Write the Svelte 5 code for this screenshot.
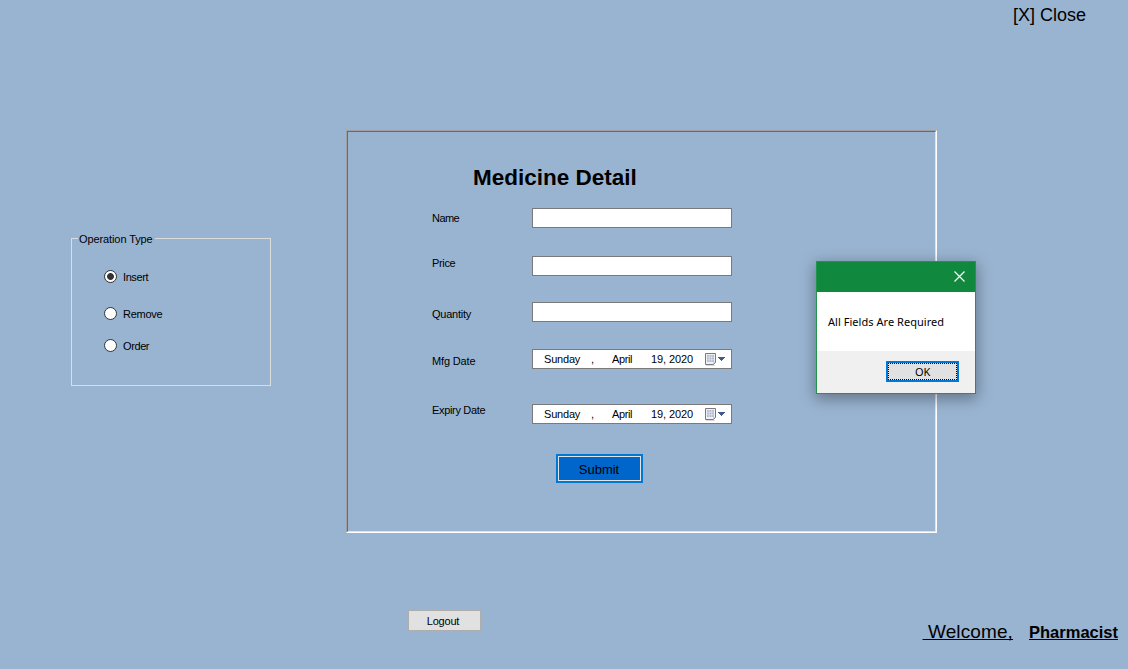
<script>
  const operations = [
    { name: 'Insert', top: 0, ls: '-0.4px' },
    { name: 'Remove', top: 24, ls: '-0.25px' },
    { name: 'Order', top: 19, ls: '-0.4px' }
  ];
  let selected = $state('Insert');

  const fields = [
    { label: 'Name', gap: 0, shift: 0, ls: '-0.55px' },
    { label: 'Price', gap: 28, shift: -6, ls: '-0.35px' },
    { label: 'Quantity', gap: 26, shift: 4, ls: '-0.25px' },
    { label: 'Mfg Date', gap: 27, shift: 4, date: true, ls: '-0.15px' },
    { label: 'Expiry Date', gap: 35, shift: -8, date: true, ls: '-0.33px' }
  ];
</script>

<div class="screen">
  <header><span class="close">[X] Close</span></header>

  <main>
    <section class="group">
      <span class="legend">Operation Type</span>
      {#each operations as op}
        <label class="radio" style="margin-top:{op.top}px">
          <input type="radio" name="op" value={op.name} bind:group={selected} />
          <span style="letter-spacing:{op.ls}">{op.name}</span>
        </label>
      {/each}
    </section>

    <section class="panel">
      <div class="inner">
        <h1>Medicine Detail</h1>
        {#each fields as f}
          <div class="field" style="margin-top:{f.gap}px">
            <span class="label" style="margin-top:{f.shift}px;letter-spacing:{f.ls}">{f.label}</span>
            {#if f.date}
              <div class="box date">
                <span class="day">Sunday</span><span class="comma">,</span>
                <span class="month">April</span><span class="year">19, 2020</span>
                <svg width="22" height="14" viewBox="0 0 22 14">
                  <path d="M2 13.500h9" fill="none" stroke="#dcd8d8" />
                  <path d="M1.500 1.500h10v9l-2 2h-8z" fill="#eef1f6" stroke="#7d7780" stroke-linejoin="round" />
                  <path d="M3 3h7v7H3z" fill="#b3bccd" />
                  <path d="M3 5.200h7M3 7.700h7M5.200 3v7M7.700 3v7" stroke="#e9edf4" stroke-width=".6" />
                  <path d="M9.500 12.500v-2h2z" fill="#9a959d" />
                  <path d="M14 5h7v1h-1v1h-1v1h-1v1h-1V8h-1V7h-1V6h-1z" fill="#45598a" />
                </svg>
              </div>
            {:else}
              <input class="box" type="text" aria-label={f.label} />
            {/if}
          </div>
        {/each}
        <button class="submit"><span>Submit</span></button>
      </div>
    </section>
  </main>

  <footer>
    <button class="logout">Logout</button>
    <div class="user"><span class="welcome">&nbsp;Welcome,</span><span class="role">Pharmacist</span></div>
  </footer>

  <div class="dialog">
    <div class="titlebar">
      <svg width="11" height="11" viewBox="0 0 11 11"><path d="M.5.5l10 10M10.500.5l-10 10" stroke="#fff" stroke-width="1.2" /></svg>
    </div>
    <div class="message">All Fields Are Required</div>
    <div class="actions"><button class="ok"><span>OK</span></button></div>
  </div>
</div>

<style>
  :global(body) { background: #99b4d1; }
  .screen {
    position: relative; width: 1128px; height: 669px; overflow: hidden;
    display: flex; flex-direction: column; box-sizing: border-box;
    background: #99b4d1; color: #000;
    font: 11px/14px "Liberation Sans", Arial, sans-serif;
  }
  button, input { font: inherit; color: inherit; box-sizing: border-box; padding: 0; margin: 0; }
  header { height: 130px; display: flex; justify-content: flex-end; padding: 5px 42px 0 0; box-sizing: border-box; }
  .close { font-size: 18px; line-height: 20px; white-space: nowrap; }
  main { display: flex; height: 403px; padding-left: 71px; align-items: flex-start; }
  .group {
    width: 200px; height: 148px; margin: 108px 75px 0 0; box-sizing: border-box;
    border: 1px solid #dcdcdc; padding-left: 32px;
  }
  .legend {
    display: block; width: 77px; height: 14px; margin: -7px 0 24px -26px; padding-left: 1px;
    box-sizing: border-box; background: #99b4d1; white-space: nowrap; letter-spacing: -.1px;
  }
  .radio { display: flex; align-items: center; gap: 6px; height: 13px; }
  .radio input {
    appearance: none; width: 13px; height: 13px; border: 1px solid #333; border-radius: 50%; background: #fff;
  }
  .radio input:checked { background: radial-gradient(circle, #333 3px, #fff 3.800px); }
  .panel {
    width: 591px; height: 403px; box-sizing: border-box;
    border: 1px solid; border-color: #a0a0a0 #fff #fff #a0a0a0;
  }
  .inner {
    height: 401px; box-sizing: border-box; border: 1px solid;
    border-color: #696969 #e3e3e3 #e3e3e3 #696969; padding: 32px 0 0 84px;
  }
  h1 { margin: 0 0 17px 41px; padding-top: 1px; font-size: 22.5px; line-height: 26px; white-space: nowrap; }
  .field { display: flex; align-items: center; height: 20px; }
  .label { width: 100px; height: 14px; white-space: nowrap; }
  .box { width: 200px; height: 20px; box-sizing: border-box; border: 1px solid #7a7a7a; background: #fff; outline: 0; }
  .date { display: grid; grid-template-columns: 47px 21px 39px 53px 22px; padding-left: 11px; align-items: center; white-space: nowrap; letter-spacing: -.2px; }
  .month { letter-spacing: -.4px; }
  .year { letter-spacing: -.1px; }
  .submit {
    display: block; width: 87px; height: 29px; margin: 30px 0 0 124px; padding: 0;
    border: 2px solid #0078d7; background: #0066cc; font-size: 13px;
  }
  .submit span { display: block; height: 25px; line-height: 26px; box-sizing: border-box; border: 1px solid #e3e3e3; padding-right: 1px; }
  footer { display: flex; justify-content: space-between; padding: 77px 10px 0 408px; }
  .logout { width: 73px; height: 21px; border: 1px solid #adadad; background: #e1e1e1; padding-right: 3px; letter-spacing: -.2px; }
  .user { display: flex; gap: 16px; align-items: baseline; margin-top: 10px; white-space: nowrap; text-decoration-skip-ink: none; }
  .welcome { font-size: 19px; line-height: 24px; letter-spacing: .12px; text-decoration: underline; text-decoration-thickness: 1px; }
  .role { font-size: 16.5px; font-weight: bold; letter-spacing: 0; text-decoration: underline; text-decoration-thickness: 1px; }
  .dialog {
    position: absolute; left: 816px; top: 261px; width: 160px; height: 133px; box-sizing: border-box;
    border: 1px solid #23954b; background: #fff; box-shadow: 0 4px 14px 1px rgba(0, 0, 0, .35);
    font-family: "Noto Sans", sans-serif;
  }
  .titlebar { height: 30px; background: #10893e; display: flex; justify-content: flex-end; align-items: center; padding: 0 10px 2px 0; box-sizing: border-box; }
  .message { height: 59px; line-height: 60px; padding-left: 11px; white-space: nowrap; letter-spacing: .04px; }
  .actions { height: 42px; background: #f0f0f0; display: flex; justify-content: flex-end; padding: 10px 16px 0 0; box-sizing: border-box; }
  .ok { width: 73px; height: 21px; border: 2px solid #0078d7; background: #e1e1e1; }
  .ok span { display: block; height: 17px; line-height: 16px; border: 1px dotted #000; box-sizing: border-box; letter-spacing: -.3px; }
</style>
